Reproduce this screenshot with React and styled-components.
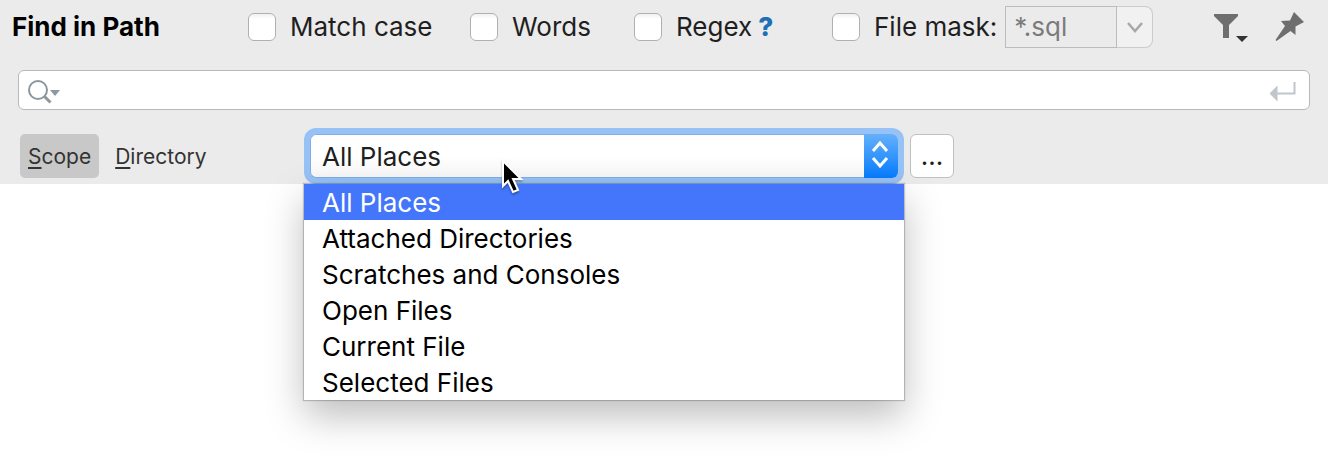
import { useState } from "react";
import styled, { createGlobalStyle, css } from "styled-components";

const GlobalStyle = createGlobalStyle`
  * {
    box-sizing: border-box;
  }
  body {
    margin: 0;
    background: #ffffff;
    font-family: Inter, "Liberation Sans", sans-serif;
    font-size: 26px;
    line-height: 36px;
    color: #1f1f1f;
  }
  button,
  input,
  select {
    font: inherit;
    color: inherit;
  }
`;

const Page = styled.main`
  min-height: 100vh;
`;

const Panel = styled.section`
  display: flex;
  flex-direction: column;
  background: #ebebeb;
  padding: 6px 0;
`;

const TopBar = styled.header`
  display: grid;
  grid-template-columns: 236px 222px 164px 198px auto 1fr;
  align-items: center;
  height: 42px;
  padding: 0 23px 0 12px;
  white-space: nowrap;
`;

const Title = styled.h1`
  margin: 0;
  font-size: 26px;
  font-weight: 700;
  color: #000000;
`;

const Option = styled.div`
  display: flex;
  align-items: center;
`;

const OptionLabel = styled.label`
  display: flex;
  align-items: center;
  gap: 14px;
`;

const Checkbox = styled.input`
  appearance: none;
  width: 28px;
  height: 28px;
  margin: 0;
  border: 1px solid #b0b0b0;
  border-radius: 6px;
  background: #ffffff linear-gradient(#f1f1f1, #ffffff 5px);

  &:checked {
    background: #1a80f8;
  }
`;

const HelpLink = styled.a`
  margin-left: 6px;
  font-weight: 800;
  color: #1d6fb8;
  text-decoration: none;
`;

const Mask = styled.div`
  display: flex;
  height: 42px;
  margin-left: 8px;
`;

const MaskInput = styled.input`
  width: 112px;
  padding: 0 8px;
  border: 1px solid #bcbcbc;
  background: #ebebeb;
  color: #7b7b7b;
`;

const MaskButton = styled.button`
  display: flex;
  align-items: center;
  justify-content: center;
  width: 36px;
  padding: 0;
  border: 1px solid #cbcbcb;
  border-left: 0;
  border-radius: 0 8px 8px 0;
  background: #f1f1f1;
`;

const Tools = styled.div`
  display: flex;
  justify-content: flex-end;
  gap: 26px;
`;

const IconButton = styled.button`
  display: flex;
  padding: 0;
  border: 0;
  background: none;
`;

const SearchBox = styled.div`
  display: flex;
  align-items: center;
  height: 40px;
  margin: 22px 18px 24px;
  padding: 4px 12px 0 8px;
  border: 1px solid #b9b9b9;
  border-radius: 6px;
  background: #ffffff;
`;

const SearchInput = styled.input`
  flex: 1;
  min-width: 0;
  height: 32px;
  border: 0;
  outline: 0;
  background: none;
`;

const ScopeBar = styled.div`
  display: flex;
  padding: 0 20px;
`;

const Tabs = styled.div`
  display: flex;
  gap: 8px;
  width: 290px;
`;

const Tab = styled.button`
  height: 44px;
  padding: 2px 8px 0;
  border: 0;
  border-radius: 5px;
  background: ${(props) => (props.$active ? "#c8c8c8" : "transparent")};
  font-size: 21px;
  color: #333333;
`;

const Mnemonic = styled.span`
  text-decoration: underline;
  text-decoration-thickness: 2px;
  text-underline-offset: 3px;
  text-decoration-skip-ink: none;
`;

const Combo = styled.div`
  position: relative;
  display: flex;
  flex: 0 1 588px;
  height: 44px;
  border-radius: 6px;
  box-shadow: 0 0 0 6px #97c2f6;
`;

const ComboSelect = styled.select`
  appearance: none;
  flex: 1;
  min-width: 0;
  padding: 2px 11px 0;
  border: 1px solid #7eafe8;
  border-right: 0;
  border-radius: 6px 0 0 6px;
  outline: 0;
  background: linear-gradient(#ffffff 50%, #f8f8f8);
`;

const Stepper = styled.span`
  display: flex;
  align-items: center;
  justify-content: center;
  width: 34px;
  padding: 0 2px 2px 0;
  border-radius: 0 6px 6px 0;
  background: linear-gradient(#65b0fb, #067cff);
`;

const Menu = styled.ul`
  position: absolute;
  z-index: 1;
  top: 50px;
  left: -6px;
  right: -6px;
  margin: 0;
  padding: 0;
  list-style: none;
  background: #ffffff;
  box-shadow:
    0 0 1px 1px rgba(0, 0, 0, 0.2),
    0 16px 36px rgba(0, 0, 0, 0.26);
`;

const MenuItem = styled.li`
  padding: 0 18px;
  height: 36px;
  line-height: 38px;
  color: #000000;
  ${(props) =>
    props.$selected &&
    css`
      background: #4376fa;
      color: #ffffff;
    `}
`;

const MoreButton = styled.button`
  width: 44px;
  height: 44px;
  margin-left: 12px;
  padding: 0;
  border: 1px solid #c0c0c0;
  border-radius: 6px;
  background: #ffffff;
`;

const Pointer = styled.svg`
  position: absolute;
  z-index: 2;
  top: 24px;
  left: 190px;
  pointer-events: none;
  filter: drop-shadow(0 2px 1px rgba(0, 0, 0, 0.3));
`;

const SearchIcon = () => (
  <svg width="34" height="26" viewBox="0 0 34 26" fill="none">
    <circle cx="11" cy="11" r="9" stroke="#8c979f" strokeWidth="2" />
    <path d="M17 17l6.500 6.500" stroke="#8c979f" strokeWidth="3" />
    <path d="M23 11h10l-5 6z" fill="#8c979f" />
  </svg>
);

const EnterIcon = () => (
  <svg width="28" height="20" viewBox="0 0 28 20">
    <path d="M0.500 11.500L8.500 3.500v16z" fill="#c0c6cb" />
    <path d="M8 11.500h17.500V0" fill="none" stroke="#c0c6cb" strokeWidth="2" />
  </svg>
);

const FilterIcon = () => (
  <svg width="36" height="30" viewBox="0 0 36 30">
    <path d="M1 2h24v2l-9 9v13h-6V13L1 4z" fill="#6e6e6e" />
    <path d="M23 24h12l-6 6z" fill="#333333" />
  </svg>
);

const PinIcon = () => (
  <svg width="30" height="30" viewBox="0 0 30 30">
    <path
      d="M19 0l10 10-8.500 4.500V23l-5-4L1.500 29 0.500 28l9.500-14-4-5 9-0.500z"
      fill="#6e6e6e"
    />
  </svg>
);

const scopes = [
  "All Places",
  "Attached Directories",
  "Scratches and Consoles",
  "Open Files",
  "Current File",
  "Selected Files",
];

const CheckOption = ({ label, children }) => (
  <Option>
    <OptionLabel>
      <Checkbox type="checkbox" />
      {label}
    </OptionLabel>
    {children}
  </Option>
);

const App = () => {
  const [scope, setScope] = useState(scopes[0]);

  return (
    <Page>
      <GlobalStyle />
      <Panel>
        <TopBar>
          <Title>Find in Path</Title>
          <CheckOption label="Match case" />
          <CheckOption label="Words" />
          <CheckOption label="Regex">
            <HelpLink href="#regex">?</HelpLink>
          </CheckOption>
          <CheckOption label="File mask:">
            <Mask>
              <MaskInput aria-label="File mask" defaultValue="*.sql" disabled />
              <MaskButton aria-label="Recent masks" disabled>
                <svg width="16" height="12" viewBox="0 0 16 12" fill="none">
                  <path d="M1 2l7 8 7-8" stroke="#a8a8a8" strokeWidth="2.500" />
                </svg>
              </MaskButton>
            </Mask>
          </CheckOption>
          <Tools>
            <IconButton aria-label="Filter">
              <FilterIcon />
            </IconButton>
            <IconButton aria-label="Pin window">
              <PinIcon />
            </IconButton>
          </Tools>
        </TopBar>
        <SearchBox>
          <SearchIcon />
          <SearchInput aria-label="Search text" />
          <EnterIcon />
        </SearchBox>
        <ScopeBar>
          <Tabs>
            <Tab $active>
              <Mnemonic>S</Mnemonic>cope
            </Tab>
            <Tab>
              <Mnemonic>D</Mnemonic>irectory
            </Tab>
          </Tabs>
          <Combo>
            <ComboSelect
              aria-label="Scope"
              value={scope}
              onChange={(e) => setScope(e.target.value)}
            >
              {scopes.map((name) => (
                <option key={name}>{name}</option>
              ))}
            </ComboSelect>
            <Stepper>
              <svg width="18" height="28" viewBox="0 0 18 28" fill="none">
                <path
                  d="M2 10l7-8 7 8M2 17l7 8 7-8"
                  stroke="#ffffff"
                  strokeWidth="3"
                />
              </svg>
            </Stepper>
            <Menu>
              {scopes.map((name) => (
                <MenuItem
                  key={name}
                  $selected={name === scope}
                  onClick={() => setScope(name)}
                >
                  {name}
                </MenuItem>
              ))}
            </Menu>
            <Pointer width="24" height="38" viewBox="0 0 24 38">
              <path
                d="M3 3v25l5-5 5 11 5-2-5-11h8z"
                fill="#000000"
                stroke="#ffffff"
                strokeWidth="2"
              />
            </Pointer>
          </Combo>
          <MoreButton aria-label="Edit scopes">...</MoreButton>
        </ScopeBar>
      </Panel>
    </Page>
  );
};

export default App;
